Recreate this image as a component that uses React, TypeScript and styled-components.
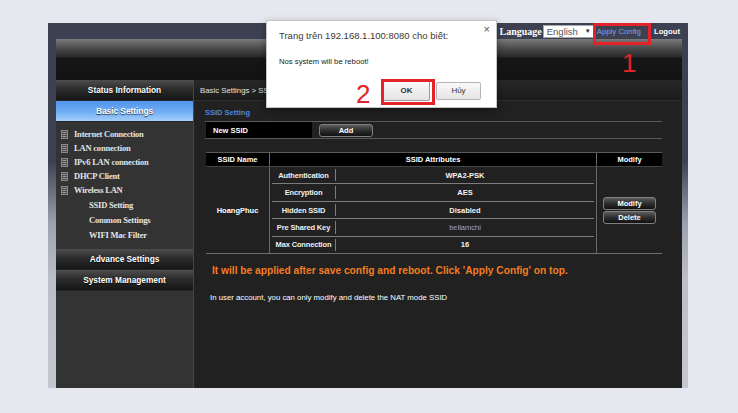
import React from 'react'
import styled, { createGlobalStyle } from 'styled-components'

const GlobalStyle = createGlobalStyle`
  html, body {
    margin: 0;
    padding: 0;
  }
  body {
    background: #e7e7ef;
    font-family: 'Liberation Sans', Arial, sans-serif;
  }
`

const menuItems = ['Internet Connection', 'LAN connection', 'IPv6 LAN connection', 'DHCP Client', 'Wireless LAN']
const subItems = ['SSID Setting', 'Common Settings', 'WIFI Mac Filter']

const attributes = [
  { label: 'Authentication', value: 'WPA2-PSK' },
  { label: 'Encryption', value: 'AES' },
  { label: 'Hidden SSID', value: 'Disabled' },
  { label: 'Pre Shared Key', value: 'bellamchi', masked: true },
  { label: 'Max Connection', value: '16' },
]

const PageIcon: React.FC = () => (
  <svg width="7" height="9" viewBox="0 0 7 9">
    <rect x="0.5" y="0.5" width="6" height="8" fill="#4a4a4a" stroke="#8a8a8a" />
    <line x1="1.5" y1="2.5" x2="5.5" y2="2.5" stroke="#9a9a9a" />
    <line x1="1.5" y1="4.5" x2="5.5" y2="4.5" stroke="#9a9a9a" />
    <line x1="1.5" y1="6.5" x2="5.5" y2="6.5" stroke="#9a9a9a" />
  </svg>
)

const App: React.FC = () => {
  return (
    <>
      <GlobalStyle />
      <Page>
        <Frame>
          <TopBar>
            <LangLabel>Language</LangLabel>
            <LangSelect>
              <span>English</span>
              <SelectArrow>▼</SelectArrow>
            </LangSelect>
            <ApplyLink>Apply Config</ApplyLink>
            <LogoutLink>Logout</LogoutLink>
          </TopBar>
          <Header />
          <Body>
            <Sidebar>
              <MenuBar>Status Information</MenuBar>
              <MenuBar $active>Basic Settings</MenuBar>
              <MenuList>
                {menuItems.map((item) => (
                  <MenuItem key={item}>
                    <PageIcon />
                    <span>{item}</span>
                  </MenuItem>
                ))}
                {subItems.map((item) => (
                  <SubItem key={item}>{item}</SubItem>
                ))}
              </MenuList>
              <MenuBar $gap>Advance Settings</MenuBar>
              <MenuBar>System Management</MenuBar>
            </Sidebar>
            <Main>
              <Breadcrumb>Basic Settings &gt; SSID Setting</Breadcrumb>
              <Content>
                <SectionTitle>SSID Setting</SectionTitle>
                <FormRow>
                  <FieldLabel>New SSID</FieldLabel>
                  <DarkButton $width={54}>Add</DarkButton>
                </FormRow>
                <Table>
                  <TableHead>
                    <HeadCell>SSID Name</HeadCell>
                    <HeadCell>SSID Attributes</HeadCell>
                    <HeadCell $last>Modify</HeadCell>
                  </TableHead>
                  <TableBody>
                    <NameCell>HoangPhuc</NameCell>
                    <AttrCell>
                      {attributes.map((a) => (
                        <AttrRow key={a.label}>
                          <AttrLabel>{a.label}</AttrLabel>
                          <AttrValue $masked={a.masked}>{a.value}</AttrValue>
                        </AttrRow>
                      ))}
                    </AttrCell>
                    <ModifyCell>
                      <DarkButton $width={53}>Modify</DarkButton>
                      <DarkButton $width={53}>Delete</DarkButton>
                    </ModifyCell>
                  </TableBody>
                </Table>
                <Notice>It will be applied after save config and reboot. Click 'Apply Config' on top.</Notice>
                <Note>In user account, you can only modify and delete the NAT mode SSID</Note>
              </Content>
            </Main>
          </Body>
        </Frame>

        <Dialog>
          <CloseMark>×</CloseMark>
          <DialogTitle>Trang trên 192.168.1.100:8080 cho biết:</DialogTitle>
          <DialogMessage>Nos system will be reboot!</DialogMessage>
          <DialogButtons>
            <DialogButton $primary>OK</DialogButton>
            <DialogButton>Hủy</DialogButton>
          </DialogButtons>
        </Dialog>

        <Highlight style={{ left: 593, top: 23, width: 58, height: 22 }} />
        <Highlight style={{ left: 381, top: 79, width: 54, height: 26 }} />
        <StepNumber style={{ left: 622, top: 50 }}>1</StepNumber>
        <StepNumber style={{ left: 356, top: 81 }}>2</StepNumber>
      </Page>
    </>
  )
}

const Page = styled.div`
  position: relative;
  width: 738px;
  height: 413px;
  box-sizing: border-box;
  padding: 23px 50px 25px 48px;
  overflow: hidden;
`

const Frame = styled.div`
  width: 640px;
  height: 365px;
  box-sizing: border-box;
  padding: 0 6px 0 8px;
  display: flex;
  flex-direction: column;
  background: linear-gradient(180deg, #3d4050 0%, #3e4152 38%, #9ea2ae 55%, #bcbfc9 70%, #c4c7d0 100%);
`

const TopBar = styled.div`
  height: 16px;
  display: flex;
  align-items: center;
  justify-content: flex-end;
  padding-right: 2px;
`

const LangLabel = styled.span`
  font-family: 'Liberation Serif', 'Times New Roman', serif;
  font-weight: bold;
  font-size: 10px;
  color: #ffffff;
  margin-right: 1px;
`

const LangSelect = styled.div`
  width: 51px;
  height: 13px;
  box-sizing: border-box;
  background: #ffffff;
  border: 1px solid #a8a8a8;
  display: flex;
  align-items: center;
  justify-content: space-between;
  padding: 0 2px 0 3px;
  font-size: 9.5px;
  color: #555555;
`

const SelectArrow = styled.span`
  font-size: 6px;
  color: #222222;
`

const ApplyLink = styled.span`
  margin-left: 3px;
  font-size: 7.8px;
  color: #7aa2ea;
`

const LogoutLink = styled.span`
  margin-left: 13px;
  font-size: 7.7px;
  font-weight: bold;
  color: #ffffff;
`

const Header = styled.div`
  height: 41px;
  flex-shrink: 0;
  background: linear-gradient(180deg, #7b7b7b 0%, #4c4c4c 22%, #282828 44%, #171717 47%, #121212 100%);
`

const Body = styled.div`
  flex: 1;
  display: flex;
  min-height: 0;
`

const Sidebar = styled.div`
  width: 138px;
  box-sizing: border-box;
  background: #333333;
  border-right: 1px solid #464646;
  display: flex;
  flex-direction: column;
`

const MenuBar = styled.div<{ $active?: boolean; $gap?: boolean }>`
  height: 20px;
  flex-shrink: 0;
  margin-top: ${(p) => (p.$gap ? '7px' : '0')};
  border-bottom: 1px solid #262626;
  display: flex;
  align-items: center;
  justify-content: center;
  font-weight: bold;
  font-size: 8.3px;
  color: #ffffff;
  text-shadow: 0 1px 1px rgba(0, 0, 0, 0.7);
  background: ${(p) =>
    p.$active
      ? 'linear-gradient(180deg, #4f95ec 0%, #72aef3 55%, #a4cefa 100%)'
      : 'linear-gradient(180deg, #4e4e4e 0%, #2c2c2c 45%, #151515 100%)'};
`

const MenuList = styled.div`
  padding: 5px 0 0 5px;
  font-family: 'Liberation Serif', 'Times New Roman', serif;
  font-weight: bold;
  font-size: 8.5px;
  letter-spacing: -0.2px;
  color: #e4e4e4;
`

const MenuItem = styled.div`
  height: 14px;
  display: flex;
  align-items: center;
  gap: 6px;
`

const SubItem = styled.div`
  height: 15px;
  display: flex;
  align-items: center;
  padding-left: 28px;
`

const Main = styled.div`
  flex: 1;
  background: #212121;
  display: flex;
  flex-direction: column;
`

const Breadcrumb = styled.div`
  height: 20px;
  flex-shrink: 0;
  border-bottom: 1px solid #2f2f2f;
  background: linear-gradient(180deg, #282828, #1b1b1b);
  padding-left: 6px;
  display: flex;
  align-items: center;
  font-size: 7.8px;
  color: #e2e2e2;
`

const Content = styled.div`
  padding: 0 20px 0 11px;
`

const SectionTitle = styled.div`
  margin-top: 7px;
  line-height: 10px;
  font-weight: bold;
  font-size: 7.5px;
  color: #4d86da;
`

const FormRow = styled.div`
  margin-top: 3px;
  height: 16px;
  border-top: 1px solid #585858;
  border-bottom: 1px solid #585858;
  display: flex;
  align-items: center;
`

const FieldLabel = styled.div`
  width: 106px;
  height: 100%;
  margin-left: 1px;
  margin-right: 7px;
  box-sizing: border-box;
  padding-left: 7px;
  background: #000000;
  display: flex;
  align-items: center;
  font-weight: bold;
  font-size: 7.5px;
  color: #ffffff;
`

const DarkButton = styled.div<{ $width: number }>`
  width: ${(p) => p.$width}px;
  height: 13px;
  box-sizing: border-box;
  border: 1px solid #808080;
  border-radius: 3px;
  background: linear-gradient(180deg, #5c5c5c 0%, #2e2e2e 50%, #111111 100%);
  display: flex;
  align-items: center;
  justify-content: center;
  font-weight: bold;
  font-size: 7.5px;
  color: #ffffff;
`

const Table = styled.div`
  margin: 13px 0 0 1px;
  width: 456px;
  border-top: 1px solid #5a5a5a;
  border-bottom: 1px solid #6e6e6e;
`

const TableHead = styled.div`
  display: grid;
  grid-template-columns: 64px 327px 1fr;
  height: 13px;
  background: #000000;
`

const HeadCell = styled.div<{ $last?: boolean }>`
  border-right: ${(p) => (p.$last ? 'none' : '1px solid #6a6a6a')};
  display: flex;
  align-items: center;
  justify-content: center;
  font-weight: bold;
  font-size: 7.5px;
  color: #ffffff;
`

const TableBody = styled.div`
  display: grid;
  grid-template-columns: 64px 327px 1fr;
  height: 86px;
  border-top: 1px solid #444444;
`

const NameCell = styled.div`
  border-right: 1px solid #6a6a6a;
  display: flex;
  align-items: center;
  justify-content: center;
  font-weight: bold;
  font-size: 7.5px;
  color: #ffffff;
`

const AttrCell = styled.div`
  border-right: 1px solid #6a6a6a;
  padding: 0 2px;
  display: flex;
  flex-direction: column;
`

const AttrRow = styled.div`
  flex: 1;
  display: grid;
  grid-template-columns: 64px 1fr;
  &:not(:last-child) {
    border-bottom: 1px solid #7c7c7c;
  }
`

const AttrLabel = styled.div`
  margin: 2px 0;
  border-right: 1px solid #7c7c7c;
  display: flex;
  align-items: center;
  justify-content: center;
  font-weight: bold;
  font-size: 7.5px;
  letter-spacing: -0.15px;
  color: #f0f0f0;
`

const AttrValue = styled.div<{ $masked?: boolean }>`
  display: flex;
  align-items: center;
  justify-content: center;
  font-weight: ${(p) => (p.$masked ? 'normal' : 'bold')};
  font-size: 7.5px;
  color: ${(p) => (p.$masked ? '#a8a8c8' : '#f4f4f4')};
  filter: ${(p) => (p.$masked ? 'blur(0.7px)' : 'none')};
`

const ModifyCell = styled.div`
  display: flex;
  flex-direction: column;
  align-items: center;
  justify-content: center;
  gap: 1px;
`

const Notice = styled.div`
  margin: 11px 0 0 7px;
  line-height: 12px;
  font-weight: bold;
  font-size: 10.2px;
  color: #f47d20;
`

const Note = styled.div`
  margin: 16px 0 0 5px;
  line-height: 10px;
  font-size: 7.8px;
  color: #ffffff;
`

const Dialog = styled.div`
  position: absolute;
  left: 266px;
  top: 20px;
  width: 231px;
  height: 88px;
  box-sizing: border-box;
  padding: 9px 15px 0 12px;
  background: #ffffff;
  border: 1px solid #c6c6c6;
  box-shadow: 0 3px 8px rgba(0, 0, 0, 0.35);
  display: flex;
  flex-direction: column;
`

const CloseMark = styled.span`
  position: absolute;
  right: 6px;
  top: 2px;
  font-size: 11px;
  color: #555555;
`

const DialogTitle = styled.div`
  line-height: 12px;
  font-size: 9.5px;
  color: #3a3a3a;
`

const DialogMessage = styled.div`
  margin-top: 15px;
  line-height: 10px;
  font-size: 7.7px;
  color: #222222;
`

const DialogButtons = styled.div`
  margin-top: 13px;
  display: flex;
  justify-content: flex-end;
  align-items: center;
  gap: 6px;
`

const DialogButton = styled.div<{ $primary?: boolean }>`
  width: ${(p) => (p.$primary ? 47 : 45)}px;
  height: ${(p) => (p.$primary ? 21 : 18)}px;
  box-sizing: border-box;
  border: 1px solid ${(p) => (p.$primary ? '#9a9a9a' : '#b4b4b4')};
  border-radius: 2px;
  background: linear-gradient(180deg, #fafafa, #e4e4e4);
  display: flex;
  align-items: center;
  justify-content: center;
  font-weight: ${(p) => (p.$primary ? 'bold' : 'normal')};
  font-size: 8px;
  color: #333333;
`

const Highlight = styled.div`
  position: absolute;
  box-sizing: border-box;
  border: 3px solid #e3222a;
`

const StepNumber = styled.div`
  position: absolute;
  font-size: 26px;
  line-height: 26px;
  color: #e3222a;
`

export default App
